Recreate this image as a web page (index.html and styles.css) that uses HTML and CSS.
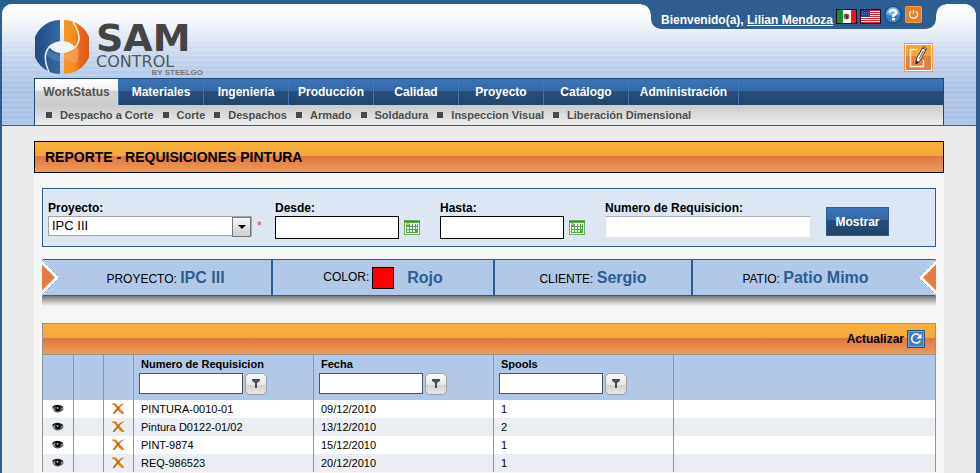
FILE: index.html
```html
<!DOCTYPE html>
<html lang="es">
<head>
<meta charset="utf-8">
<title>SAM Control - Requisiciones Pintura</title>
<link rel="stylesheet" href="styles.css">
</head>
<body>
<svg class="symbols" width="0" height="0" aria-hidden="true">
  <symbol id="calendar" viewBox="0 0 16 15">
    <rect width="16" height="15" fill="#66b157"/>
    <rect y="1" width="16" height="1" fill="#2f8a35"/>
    <rect x="1" y="3" width="14" height="11" fill="#fff"/>
    <rect x="2" y="4" width="12" height="9" fill="#55a548"/>
    <rect x="2" y="3" width="3" height="2" fill="#cdb878"/>
    <path fill="#fff" d="M6 4h2v2H6zM9 4h2v2H9zM12 4h1v2h-1zM3 7h2v2H3zM6 7h2v2H6zM9 7h2v2H9zM12 7h1v2h-1zM3 10h2v2H3zM6 10h2v2H6zM9 10h2v2H9z"/>
  </symbol>
  <symbol id="funnel" viewBox="0 0 10 10">
    <path fill="#4a4f52" d="M1 0h8v2L6 4v5H4V4L1 2z"/>
  </symbol>
  <symbol id="eye" viewBox="0 0 12 10">
    <path d="M0 4.500Q5-1 10.500 3.500L12 5Q6 11 1.500 6.500" fill="#8b8b8b"/>
    <path d="M.5 3.500Q5-.5 11 3.500" fill="none" stroke="#111" stroke-width="1.500"/>
    <path d="M2 6.500Q6 9.500 11 5.500" fill="none" stroke="#444"/>
    <circle cx="6" cy="4.500" r="2.800" fill="#000"/>
    <circle cx="5.500" cy="4" r="1" fill="#bbb"/>
  </symbol>
  <symbol id="cross" viewBox="0 0 13 12">
    <path d="M0 .5H3.500Q5 1 6.500 4L12.500 10.500L10 11L5 6.500Q3.500 2 0 1.500z" fill="#e07a10"/>
    <path d="M12.500 .5Q9 .5 5.500 4.500L.5 10.500L2.500 11L7 5.500Q9.500 2 12.500 .5z" fill="#c9640c"/>
  </symbol>
  <symbol id="arrow" viewBox="0 0 18 37">
    <path d="M0 0L18 18.500L0 37z" fill="#fff"/>
    <path d="M0 1L17.500 18.500L0 36" fill="none" stroke="#2d5d91" stroke-dasharray="1 1"/>
    <path d="M0 5.500L13 18.500L0 31.500z" fill="#e47c42"/>
  </symbol>
</svg>

<div class="page">
  <header class="header">
    <div class="user">
      <span>Bienvenido(a), <a href="#">Lilian Mendoza</a></span>
      <a class="icon" href="#" aria-label="Español"><svg width="21" height="15" viewBox="0 0 21 15"><rect width="21" height="15" fill="#1c0f0f"/><rect x="1" y="1" width="6" height="13" fill="#1d8a3a"/><rect x="7" y="1" width="8" height="13" fill="#fff"/><rect x="15" y="1" width="5" height="13" fill="#ee1520"/><circle cx="10.500" cy="7.500" r="3" fill="#8a6b52"/><path d="M9 5l3 2v3l-2-1z" fill="#3d3428"/></svg></a>
      <a class="icon" href="#" aria-label="English"><svg width="21" height="15" viewBox="0 0 21 15"><rect width="21" height="15" fill="#1c1020"/><rect x="1" y="1" width="19" height="13" fill="#fff"/><path d="M1 1.500h19M1 3.500h19M1 5.500h19M1 7.500h19M1 9.500h19M1 11.500h19M1 13.500h19" stroke="#e8202e"/><rect x="1" y="1" width="9" height="7" fill="#23408f"/><path d="M2 3.500h8M2 5.500h8" stroke="#5d72b0" stroke-dasharray="1 1"/></svg></a>
      <a class="icon help" href="#" aria-label="Ayuda"><svg width="18" height="18" viewBox="0 0 18 18"><circle cx="9" cy="9" r="9" fill="#174a85"/><circle cx="9" cy="9" r="7.500" fill="#2f80c8"/><path d="M2 8A7 7 0 0 1 16 8Q9 11 2 8" fill="#6aaee4"/><path d="M5.500 6.500Q6 4 9 4T12.200 6.700Q12 8.300 9.300 9.200V11" fill="none" stroke="#fff" stroke-width="2.500"/><rect x="8" y="12" width="3" height="2.500" fill="#fff"/></svg></a>
      <a class="icon power" href="#" aria-label="Salir"><svg width="17" height="17" viewBox="0 0 17 17"><rect width="17" height="17" rx="2" fill="#f6a13a"/><path d="M1 9h15v7H1z" fill="#e67b36"/><rect x="1" y="1" width="15" height="8" fill="#e87f24"/><path d="M6 5.200A4 4 0 1 0 11 5.200M8.500 3.500V8" fill="none" stroke="#fff" stroke-width="1.300"/></svg></a>
    </div>

    <div class="brand-row">
      <a class="brand" href="#" aria-label="SAM Control by Steelgo">
        <svg class="mark" width="54" height="54" viewBox="0 0 54 54">
          <defs>
            <linearGradient id="blue" x2="1"><stop stop-color="#1d4a80"/><stop offset="1" stop-color="#3668a3"/></linearGradient>
            <linearGradient id="orange" x2="1"><stop stop-color="#f79a20"/><stop offset=".4" stop-color="#f28a22"/><stop offset=".6" stop-color="#e5661d"/><stop offset="1" stop-color="#df5518"/></linearGradient>
          </defs>
          <path d="M25 0V54A27 27 0 0 1 25 0z" fill="url(#blue)"/>
          <path d="M29 0V54A27 27 0 0 0 29 0z" fill="url(#orange)"/>
          <path d="M12 29Q18 34 25 34V42Q15 40 11 34z" fill="#5d8cbc" opacity=".5"/>
          <path d="M42 25Q37 34 29 34V37Q34 43 42 43Q45 34 42 25z" fill="#f5a868" opacity=".6"/>
          <path d="M14 27Q19 21 27 21T40 27Q35 33 27 33T14 27z" fill="#f1f6fc"/>
          <path d="M18 24Q5 32 14 52" fill="none" stroke="#e8f0fa" stroke-width="1.500"/>
          <path d="M36 30Q51 22 38 2" fill="none" stroke="#fff0e0" stroke-width="1.500"/>
        </svg>
        <span class="wordmark">
          <span class="sam">SAM</span>
          <span class="control">CONTROL</span>
          <span class="by">BY STEELGO</span>
        </span>
      </a>
      <a class="edit" href="#" aria-label="Editar"><svg width="29" height="29" viewBox="0 0 29 29"><rect width="29" height="29" fill="#f39a3a"/><rect x="1" y="1" width="27" height="27" fill="#fff"/><rect x="2" y="2" width="25" height="11" fill="#f5a437"/><rect x="2" y="13" width="25" height="14" fill="#e4803f"/><path d="M14 6.500H6.500V23.500H19.500V17" fill="none" stroke="#fde9d2" stroke-width="1.500"/><path d="M19.500 3.500L22.500 5.500L16 18L12 21L12.500 15.500z" fill="#fff" stroke="#3b3a38"/><path d="M12 21l.5-3 2 1.500zM19 5l3 2" fill="#222" stroke="#333"/><path d="M19.500 8L15 16" stroke="#555"/></svg></a>
    </div>

    <nav class="nav">
      <ul class="tabs">
        <li class="first"><a class="active" href="#">WorkStatus</a></li>
        <li><a href="#">Materiales</a></li>
        <li><a href="#">Ingeniería</a></li>
        <li><a href="#">Producción</a></li>
        <li><a href="#">Calidad</a></li>
        <li><a href="#">Proyecto</a></li>
        <li><a href="#">Catálogo</a></li>
        <li class="wide"><a href="#">Administración</a></li>
      </ul>
      <ul class="submenu">
        <li><a href="#">Despacho a Corte</a></li>
        <li><a href="#">Corte</a></li>
        <li><a href="#">Despachos</a></li>
        <li><a href="#">Armado</a></li>
        <li><a href="#">Soldadura</a></li>
        <li><a href="#">Inspeccion Visual</a></li>
        <li><a href="#">Liberación Dimensional</a></li>
      </ul>
    </nav>
  </header>

  <main class="main">
    <h1 class="title">REPORTE - REQUISICIONES PINTURA</h1>
    <div class="content">
      <form class="filters">
        <div class="field">
          <label for="proyecto">Proyecto:</label>
          <div class="control-row">
            <span class="select-wrap"><select id="proyecto"><option>IPC III</option></select></span>
            <span class="required">*</span>
          </div>
        </div>
        <div class="field">
          <label for="desde">Desde:</label>
          <div class="control-row"><input class="date" id="desde" type="text"><button class="icon-button" type="button" aria-label="Calendario desde"><svg width="16" height="15"><use href="#calendar"/></svg></button></div>
        </div>
        <div class="field">
          <label for="hasta">Hasta:</label>
          <div class="control-row"><input class="date" id="hasta" type="text"><button class="icon-button" type="button" aria-label="Calendario hasta"><svg width="16" height="15"><use href="#calendar"/></svg></button></div>
        </div>
        <div class="field">
          <label for="numero">Numero de Requisicion:</label>
          <input class="text" id="numero" type="text">
        </div>
        <button class="submit" type="button">Mostrar</button>
      </form>

      <div class="summary">
        <svg class="arrow" width="18" height="37"><use href="#arrow"/></svg>
        <div>PROYECTO: <strong>IPC III</strong></div>
        <div class="color">COLOR: <i class="swatch"></i> <strong>Rojo</strong></div>
        <div>CLIENTE: <strong>Sergio</strong></div>
        <div>PATIO: <strong>Patio Mimo</strong></div>
        <svg class="arrow end" width="18" height="37"><use href="#arrow"/></svg>
      </div>

      <div class="grid">
        <div class="toolbar">
          <a href="#">Actualizar
            <svg width="18" height="18" viewBox="0 0 18 18"><rect width="18" height="18" rx="1" fill="#225287"/><rect x="1" y="1" width="16" height="16" fill="#69a5dc"/><rect x="2" y="2" width="14" height="14" fill="#3f7fbf"/><path d="M12.500 5.500A4.500 4.500 0 1 0 13.300 10.500" fill="none" stroke="#fff" stroke-width="1.500"/><path d="M14.500 3.500V8.500H9.500z" fill="#fff"/></svg>
          </a>
        </div>
        <table>
          <colgroup><col class="c-first"><col class="c-icon"><col class="c-icon"><col class="c-data"><col class="c-data"><col class="c-data"><col></colgroup>
          <thead>
            <tr>
              <th></th><th></th><th></th>
              <th><label for="f1">Numero de Requisicion</label><div class="filter-row"><input id="f1" type="text"><button type="button" aria-label="Filtrar requisicion"><svg width="10" height="10"><use href="#funnel"/></svg></button></div></th>
              <th><label for="f2">Fecha</label><div class="filter-row"><input id="f2" type="text"><button type="button" aria-label="Filtrar fecha"><svg width="10" height="10"><use href="#funnel"/></svg></button></div></th>
              <th><label for="f3">Spools</label><div class="filter-row"><input id="f3" type="text"><button type="button" aria-label="Filtrar spools"><svg width="10" height="10"><use href="#funnel"/></svg></button></div></th>
              <th></th>
            </tr>
          </thead>
          <tbody>
            <tr><td class="act"><svg width="12" height="10"><use href="#eye"/></svg></td><td></td><td class="act"><svg width="13" height="12"><use href="#cross"/></svg></td><td>PINTURA-0010-01</td><td>09/12/2010</td><td>1</td><td></td></tr>
            <tr><td class="act"><svg width="12" height="10"><use href="#eye"/></svg></td><td></td><td class="act"><svg width="13" height="12"><use href="#cross"/></svg></td><td>Pintura D0122-01/02</td><td>13/12/2010</td><td>2</td><td></td></tr>
            <tr><td class="act"><svg width="12" height="10"><use href="#eye"/></svg></td><td></td><td class="act"><svg width="13" height="12"><use href="#cross"/></svg></td><td>PINT-9874</td><td>15/12/2010</td><td>1</td><td></td></tr>
            <tr><td class="act"><svg width="12" height="10"><use href="#eye"/></svg></td><td></td><td class="act"><svg width="13" height="12"><use href="#cross"/></svg></td><td>REQ-986523</td><td>20/12/2010</td><td>1</td><td></td></tr>
          </tbody>
        </table>
      </div>
    </div>
  </main>
</div>
</body>
</html>
```
FILE: styles.css
```css
* { box-sizing: border-box; }

body {
  margin: 0;
  padding: 4px 4px 0 2px;
  background: #2d5d91;
  color: #000;
  font: 12px/16px "Liberation Sans", Arial, sans-serif;
}

svg { display: block; }
.symbols { position: absolute; }
ul { margin: 0; padding: 0; list-style: none; }
a { color: inherit; text-decoration: none; }
input, select, button { font: inherit; margin: 0; }

.page {
  display: flex;
  flex-direction: column;
  min-height: calc(100vh - 4px);
  background: #ebebeb;
  border-radius: 10px 12px 0 0;
}

/* Header */
.header {
  position: relative;
  padding: 0 32px;
  border-bottom: 1px solid #2d5d91;
  border-radius: 10px 12px 0 0;
  background:
    repeating-linear-gradient(rgba(255, 255, 255, .12) 0 2px, transparent 2px 5px),
    linear-gradient(#fff 0, #f4f7fc 18px, #c3d4ec 55px, #abc3e5 85px, #abc3e5 100%);
}

.user {
  position: absolute;
  top: -4px;
  right: 40px;
  display: flex;
  gap: 3px;
  height: 29px;
  padding: 9px 14px 0 10px;
  border-radius: 0 0 10px 10px;
  background: #2d5d91;
  color: #fff;
  font-weight: bold;
  line-height: 22px;
}
.user::before, .user::after {
  content: "";
  position: absolute;
  top: 4px;
  width: 10px;
  height: 10px;
}
.user::before { right: 100%; background: radial-gradient(circle at 0 100%, transparent 9px, #2d5d91 10px); }
.user::after { left: 100%; background: radial-gradient(circle at 100% 100%, transparent 9px, #2d5d91 10px); }
.user span a { text-decoration: underline; }
.user .help, .user .power { margin-top: -3px; }

.brand-row {
  display: flex;
  justify-content: space-between;
  height: 74px;
  padding: 16px 11px 0 1px;
}
.brand { display: flex; gap: 7px; }
.wordmark { display: grid; align-content: start; width: 107px; font-family: "DejaVu Sans", sans-serif; }
.sam { font-size: 38px; font-weight: bold; line-height: 36px; color: #444; }
.control { font-size: 16px; line-height: 12px; color: #555; }
.by { justify-self: end; font: bold 8px/10px "Liberation Sans", sans-serif; color: #777; }
.edit { margin-top: 23px; }

.nav {
  border-top: 1px solid #1f4878;
  border-left: 1px solid #1f4878;
  border-right: 1px solid #1f4878;
}
.tabs {
  display: flex;
  background: linear-gradient(#3b75b8 0, #3468a5 12px, #274f7d 12px, #234468 100%);
  color: #fff;
  font-weight: bold;
  text-align: center;
}
.tabs li { width: 85px; border-right: 1px solid #3d77b8; }
.tabs .first { width: 84px; }
.tabs .wide { width: 110px; }
.tabs a { display: block; line-height: 26px; }
.tabs .active {
  background: linear-gradient(#fff 0, #f2f2f2 11px, #d5d5d5 12px, #cbcbcb 100%);
  color: #555;
}
.submenu {
  display: flex;
  gap: 9px;
  height: 20px;
  padding-left: 11px;
  background: linear-gradient(#cacaca, #ededed);
  color: #4a4f4f;
  font-size: 11px;
  font-weight: bold;
  line-height: 20px;
}
.submenu li { display: flex; align-items: center; gap: 8px; }
.submenu li::before { content: ""; width: 6px; height: 6px; background: #414b4b; }

/* Report */
.main {
  display: flex;
  flex: 1;
  flex-direction: column;
  padding: 15px 32px 0;
}
.title {
  margin: 0;
  padding: 0 10px;
  border: 1px solid #000;
  background: linear-gradient(#f9b13c 0, #f5a63a 14px, #e07640 14px, #ee9a59 100%);
  font-size: 14px;
  line-height: 30px;
}
.content { flex: 1; padding: 15px 8px 0; background: #f6f6f6; }

.filters {
  display: grid;
  grid-template-columns: 227px 165px 165px 221px auto;
  justify-content: start;
  height: 59px;
  padding: 12px 5px 0;
  border: 1px solid #2d5d91;
  background: #dde7f3;
}
.field label { display: block; font-weight: bold; line-height: 15px; }
.control-row { display: flex; gap: 5px; }
.select-wrap { position: relative; }
.select-wrap::before {
  content: "";
  position: absolute;
  top: 1px;
  right: 1px;
  width: 17px;
  height: 18px;
  border: 1px solid #777;
  background: linear-gradient(#f6f6f6, #cfcfcf);
  pointer-events: none;
}
.select-wrap::after {
  content: "";
  position: absolute;
  top: 9px;
  right: 6px;
  border: 4px solid transparent;
  border-top-color: #000;
  border-bottom: 0;
  pointer-events: none;
}
select {
  width: 204px;
  height: 20px;
  padding: 0 20px 0 3px;
  border: 1px solid #a5a5ad;
  border-radius: 0;
  appearance: none;
  background: #fff;
  color: #000;
  font-size: 13px;
}
.required { color: #e04030; line-height: 20px; }
input { background: #fff; }
.date { width: 124px; height: 23px; border: 1px solid #000; }
.text {
  display: block;
  width: 206px;
  height: 22px;
  border: 1px solid #e3e3e6;
  border-top-color: #abadb3;
  border-radius: 2px;
}
.icon-button { align-self: center; padding: 0; border: 0; background: none; }
.submit {
  width: 63px;
  height: 29px;
  margin-top: 6px;
  padding: 0;
  border: 1px solid #2d5d91;
  background: linear-gradient(#3b75b8 0, #3468a5 12px, #274f7d 12px, #234468 100%);
  color: #fff;
  font-weight: bold;
}

.summary {
  position: relative;
  display: grid;
  grid-template-columns: 229fr 222fr 198fr 245fr;
  grid-template-rows: 35px;
  margin: 12px 0 27px;
  border: 1px solid #2d5d91;
  border-width: 1px 0;
  background: #b1c8e7;
  line-height: 35px;
  text-align: center;
}
.summary::after {
  content: "";
  position: absolute;
  top: calc(100% + 1px);
  width: 100%;
  height: 10px;
  background: linear-gradient(#777, #f6f6f6);
}
.summary div + div { border-left: 2px solid #2d5d91; }
.summary div:first-of-type { padding-left: 18px; }
.summary div:last-of-type { padding-right: 18px; }
.summary strong { color: #2d5d91; font-size: 16px; }
.color { display: flex; align-items: center; justify-content: center; gap: 3px; }
.color strong { margin-left: 10px; }
.swatch { width: 22px; height: 22px; border: 1px solid #000; background: #f00; }
.arrow { position: absolute; top: -1px; left: 0; }
.arrow.end { right: 0; left: auto; transform: scaleX(-1); }

/* Grid */
.grid { border: 1px solid #949494; border-bottom: 0; }
.toolbar {
  display: flex;
  justify-content: flex-end;
  padding: 0 10px;
  background: linear-gradient(#f9b13c 0, #f5a63a 14px, #e07640 14px, #ee9a59 100%);
  font-weight: bold;
}
.toolbar a { display: flex; align-items: center; gap: 3px; height: 30px; }
table { width: 100%; border-collapse: separate; border-spacing: 0; table-layout: fixed; font-size: 11px; }
.c-first { width: 31px; }
.c-icon { width: 30px; }
.c-data { width: 180px; }
th, td { padding: 0 7px; border-right: 1px solid #949494; text-align: left; vertical-align: middle; }
th:last-child, td:last-child { border-right: 0; }
th { height: 46px; padding: 0 5px; border-top: 1px solid #949494; background: #b1c8e7; vertical-align: top; }
th label { display: block; padding-left: 2px; line-height: 18px; }
.filter-row { display: flex; gap: 2px; }
.filter-row input { width: 104px; height: 21px; border: 1px solid #555; }
.filter-row button {
  display: grid;
  place-items: center;
  width: 22px;
  height: 22px;
  padding: 0;
  border: 1px solid #a0a0a0;
  border-radius: 5px;
  background: linear-gradient(#fafafa 0, #e6e6e6 11px, #d2d2d2 11px, #e8e8e8 100%);
}
td { height: 18px; background: #fff; line-height: 18px; }
tr:nth-child(even) td { background: #ebeff3; }
td.act { padding: 0; }
.act svg { margin: 0 auto; }
```
